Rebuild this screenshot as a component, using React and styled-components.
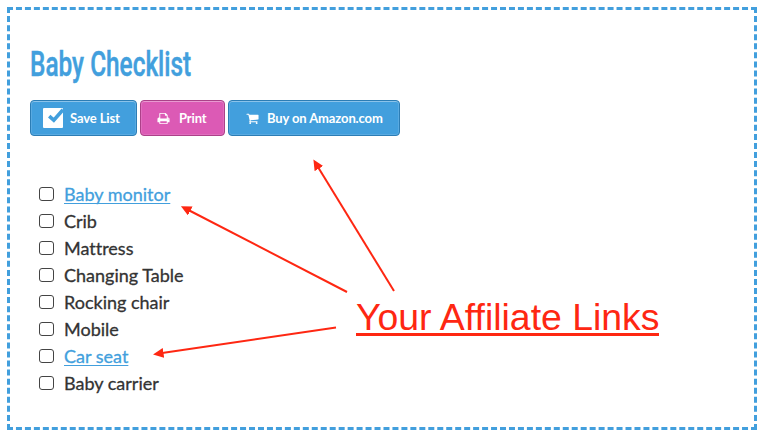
import React from "react";
import styled, { createGlobalStyle } from "styled-components";

const BLUE = "#429fdd";
const RED = "#fe2712";

const GlobalStyle = createGlobalStyle`
  *, *::before, *::after { box-sizing: border-box; }
  body {
    margin: 0;
    background: #fff;
    color: #333;
    font-family: Lato, "Open Sans", sans-serif;
  }
`;

const Page = styled.main`
  position: relative;
  height: 437px;
  padding: 7px;
  overflow: hidden;
`;

const Panel = styled.section`
  width: 750px;
  height: 423px;
  padding: 30px 20px 0;
  border: 3px dashed ${BLUE};
`;

const Title = styled.h1`
  width: max-content;
  height: 48px;
  margin: 0;
  color: ${BLUE};
  font: 500 35.5px/49px Roboto, sans-serif;
  -webkit-text-stroke: 0.5px ${BLUE};
  transform: scaleX(0.687);
  transform-origin: 0 0;
`;

const Toolbar = styled.div`
  display: flex;
  gap: 3px;
  margin-top: 12px;
`;

const Button = styled.button`
  display: flex;
  align-items: center;
  width: ${(p) => p.$width}px;
  height: 36px;
  padding: 0 0 0 ${(p) => p.$inset}px;
  gap: ${(p) => p.$gap}px;
  border: 1px solid ${(p) => (p.$pink ? "#ac4189" : "#2c7db5")};
  border-radius: 4px;
  background: ${(p) => (p.$pink ? "#dc5ab5" : BLUE)};
  box-shadow: inset 0 1px 0 rgba(255, 255, 255, 0.3), inset 0 0 0 1px rgba(255, 255, 255, 0.12);
  color: #fff;
  font: 700 13px/18px Lato, sans-serif;
  letter-spacing: -0.12px;
  white-space: nowrap;
`;

const Glyph = styled.svg`
  flex: none;
  width: ${(p) => p.$size}px;
  height: ${(p) => p.$size}px;
  fill: currentColor;
`;

const List = styled.ul`
  margin: 45px 0 0;
  padding: 0 0 0 9px;
  list-style: none;
`;

const Item = styled.li`
  display: flex;
  align-items: center;
  height: 27px;
  gap: 10px;
  font-size: 18px;
  line-height: 27px;
  font-variant-ligatures: none;
  -webkit-text-stroke: 0.3px currentColor;
`;

const Box = styled.span`
  flex: none;
  width: 15px;
  height: 14px;
  margin-top: -1px;
  border: 1.5px solid #444;
  border-radius: 3px;
`;

const ItemLink = styled.a`
  color: ${BLUE};
  text-decoration: underline;
  text-decoration-thickness: 1px;
  text-underline-offset: 2px;
  text-decoration-skip-ink: none;
`;

const Callout = styled.div`
  position: absolute;
  left: 356px;
  top: 295px;
  width: 303px;
  height: 41px;
  border-bottom: 3px solid ${RED};
  color: ${RED};
  font: 37.4px/44px "Liberation Sans", Arial, sans-serif;
  white-space: nowrap;
`;

const Arrows = styled.svg`
  position: absolute;
  left: 0;
  top: 0;
  width: 764px;
  height: 437px;
  pointer-events: none;
`;

const PRINT =
  "M448 1536h896v-256h-896v256zm0-640h896v-384h-160q-40 0-68-28t-28-68v-160h-640v640zm1152 64q0-26-19-45t-45-19-45 19-19 45 19 45 45 19 45-19 19-45zm128 0v416q0 13-9.5 22.5t-22.5 9.5h-224v160q0 40-28 68t-68 28h-960q-40 0-68-28t-28-68v-160h-224q-13 0-22.5-9.5t-9.5-22.5v-416q0-79 56.5-135.5t135.5-56.5h64v-544q0-40 28-68t68-28h672q40 0 88 20t76 48l152 152q28 28 48 76t20 88v256h64q79 0 135.5 56.5t56.5 135.5z";
const CART =
  "M704 1536q0 52-38 90t-90 38-90-38-38-90 38-90 90-38 90 38 38 90zm896 0q0 52-38 90t-90 38-90-38-38-90 38-90 90-38 90 38 38 90zm128-1088v512q0 24-16.5 42.5t-40.5 21.5l-1044 122q13 60 13 70 0 16-24 64h920q26 0 45 19t19 45-19 45-45 19h-1024q-26 0-45-19t-19-45q0-11 8-31.5t16-36 21.5-40 15.5-29.5l-177-823h-204q-26 0-45-19t-19-45 19-45 45-19h256q16 0 28.5 6.5t19.5 15.5 13 24.5 8 26 5.5 29.5 4.5 26h1201q26 0 45 19t19 45z";

const items = [
  { label: "Baby monitor", link: true },
  { label: "Crib" },
  { label: "Mattress" },
  { label: "Changing Table" },
  { label: "Rocking chair" },
  { label: "Mobile" },
  { label: "Car seat", link: true },
  { label: "Baby carrier" },
];

const arrows = [
  "M394 291L315.5 163",
  "M347 292L184.5 208",
  "M336 327.5L157 353.8",
];

export default function App() {
  return (
    <Page>
      <GlobalStyle />
      <Panel>
        <Title>Baby Checklist</Title>
        <Toolbar>
          <Button $width={107} $inset={12} $gap={7}>
            <Glyph $size={20} viewBox="0 0 20 20">
              <rect width="20" height="20" rx="1" />
              <path d="M6.2 8.2L10.8 12.2L20 1.8" fill="none" stroke={BLUE} strokeWidth="3.6" />
            </Glyph>
            Save List
          </Button>
          <Button $width={85} $inset={16} $gap={9} $pink>
            <Glyph $size={13} viewBox="0 0 1792 1792"><path d={PRINT} /></Glyph>
            Print
          </Button>
          <Button $width={172} $inset={17} $gap={8}>
            <Glyph $size={13} viewBox="0 0 1792 1792"><path d={CART} /></Glyph>
            Buy on Amazon.com
          </Button>
        </Toolbar>
        <List>
          {items.map(({ label, link }) => (
            <Item key={label}>
              <Box />
              {link ? <ItemLink>{label}</ItemLink> : <span>{label}</span>}
            </Item>
          ))}
        </List>
      </Panel>
      <Callout>Your Affiliate Links</Callout>
      <Arrows viewBox="0 0 764 437">
        <defs>
          <marker id="head" markerUnits="userSpaceOnUse" markerWidth="12" markerHeight="12" refX="6.5" refY="5" orient="auto">
            <path d="M0 0L10.5 5L0 10Z" fill={RED} />
          </marker>
        </defs>
        {arrows.map((d) => (
          <path key={d} d={d} fill="none" stroke={RED} strokeWidth="2" markerEnd="url(#head)" />
        ))}
      </Arrows>
    </Page>
  );
}
